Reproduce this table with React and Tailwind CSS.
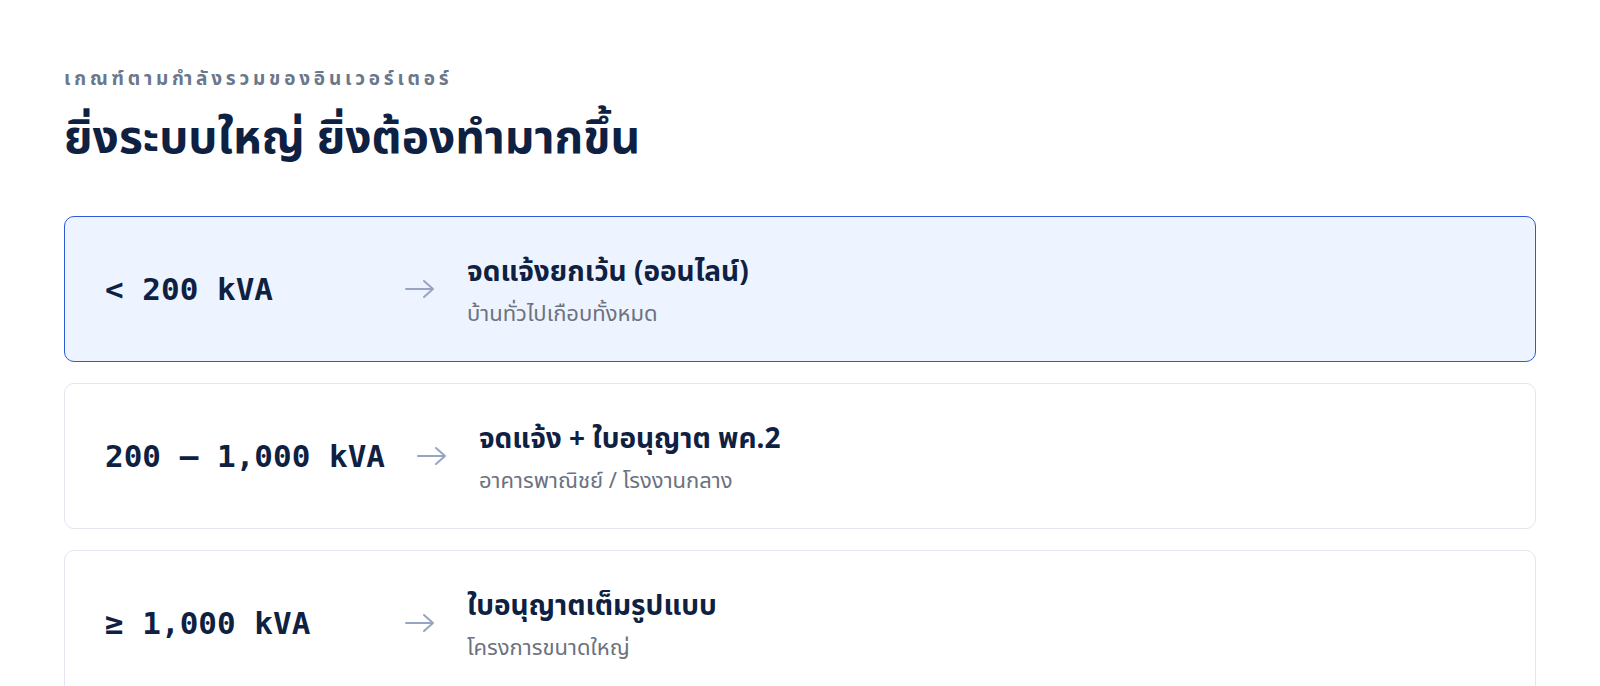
import React from "react";

const tiers = [
  {
    range: "< 200 kVA",
    title: "จดแจ้งยกเว้น (ออนไลน์)",
    note: "บ้านทั่วไปเกือบทั้งหมด",
    active: true,
  },
  {
    range: "200 – 1,000 kVA",
    title: "จดแจ้ง + ใบอนุญาต พค.2",
    note: "อาคารพาณิชย์ / โรงงานกลาง",
  },
  {
    range: "≥ 1,000 kVA",
    title: "ใบอนุญาตเต็มรูปแบบ",
    note: "โครงการขนาดใหญ่",
  },
];

const Arrow = () => (
  <svg width="30" height="20" viewBox="0 0 30 20" fill="none" stroke="#97a5c2" strokeWidth="2" strokeLinecap="round" strokeLinejoin="round">
    <path d="M1 10H28M19 2L28 10L19 18" />
  </svg>
);

const App = () => {
  return (
    <div className="min-h-screen bg-white px-16 pt-[64px] pb-16 font-['Noto_Sans','Noto_Sans_Thai','DejaVu_Sans',sans-serif]">
      {/* header */}
      <p className="text-[19px] font-bold tracking-[0.2em] text-[#6b778c]">
        เกณฑ์ตามกำลังรวมของอินเวอร์เตอร์
      </p>
      <h2 className="mt-[14px] text-[46px] font-bold leading-tight text-[#0f2142]">
        ยิ่งระบบใหญ่ ยิ่งต้องทำมากขึ้น
      </h2>

      {/* tiers */}
      <div className="mt-[52px] flex flex-col gap-[21px]">
        {tiers.map((tier, index) => (
          <div
            key={index}
            className={
              tier.active
                ? "flex h-[146px] items-center rounded-[10px] border-[1.5px] border-[#2b59d9] bg-[#eef4ff] pl-10"
                : "flex h-[146px] items-center rounded-[10px] border-[1.5px] border-[#e3e6ee] bg-white pl-10"
            }
          >
            <div className="min-w-[268px] font-['DejaVu_Sans_Mono',monospace] text-[31px] font-bold text-[#0f2142]">
              {tier.range}
            </div>
            <div className="ml-8 shrink-0">
              <Arrow />
            </div>
            <div className="ml-8 flex flex-col gap-2">
              <h3 className="text-[28px] font-bold leading-snug text-[#0f2142]">
                {tier.title}
              </h3>
              <p className="text-[22px] leading-snug text-[#6b7280]">{tier.note}</p>
            </div>
          </div>
        ))}
      </div>
    </div>
  );
};

export default App;
